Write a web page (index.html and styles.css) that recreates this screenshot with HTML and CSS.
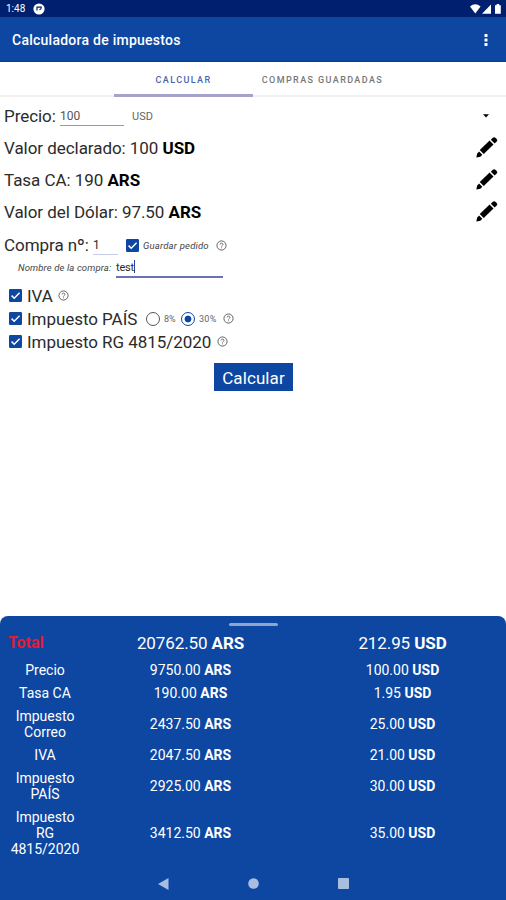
FILE: index.html
```html
<!DOCTYPE html>
<html lang="es">
<head>
    <meta charset="UTF-8">
    <meta name="viewport" content="width=device-width, initial-scale=1.0">
    <title>Calculadora de impuestos</title>
    <link rel="stylesheet" href="styles.css">
</head>
<body>
    <!-- Shared icons -->
    <svg class="sprite" width="0" height="0">
        <symbol id="pencil" viewBox="0 0 22 22">
            <path d="M3.8 14 13.6 4.6 17.5 8.6 7.7 18.1z"/>
            <path d="M14.9 3.7 16.8 1.8Q18.2.5 19.7 1.9L20.7 2.9Q22 4.4 20.7 5.6L18.6 7.4z"/>
            <path d="M3.1 15.6 6.3 18.8 4.4 20.8.3 21.4 1.2 17.4z"/>
        </symbol>
        <symbol id="help" viewBox="0 0 12 12">
            <circle cx="6" cy="6" r="5" fill="none" stroke="#555" stroke-width="1"/>
            <path d="M4.4 4.9Q4.4 3.4 6 3.4T7.6 4.8Q7.6 5.6 6.7 6 6 6.4 6 7.1M6 8.1V9" fill="none" stroke="#555" stroke-width=".9"/>
        </symbol>
        <symbol id="checked" viewBox="0 0 13 13">
            <rect width="13" height="13" rx="1.3" fill="#0d47a1"/>
            <path d="M2.6 6.6 5.2 9.2 10.6 3.8" fill="none" stroke="#fff" stroke-width="1.5"/>
        </symbol>
    </svg>

    <header class="status-bar">
        <span class="clock">1:48</span>
        <svg class="notice" width="12" height="12" viewBox="0 0 12 12">
            <circle cx="6" cy="6" r="5.6" fill="#fff"/>
            <path d="M4 7.6V4.2H8.2V5Q8 6.4 6.4 6.6" fill="none" stroke="#001f6e" stroke-width="1.2"/>
        </svg>
        <svg class="signals" width="32" height="10" viewBox="0 0 32 10">
            <path d="M0 2.4Q5.3-1.8 10.6 2.4L5.3 9.6z" fill="#fff"/>
            <path d="M12 9.7 21 .5V9.7z" fill="#fff"/>
            <path d="M25 1.2H26.6V0H29.2V1.2H30.8V9.7H25z" fill="#fff"/>
        </svg>
    </header>

    <div class="app-bar">
        <h1>Calculadora de impuestos</h1>
        <svg width="4" height="12" viewBox="0 0 4 12" fill="#fff">
            <rect x=".5" y="0" width="3" height="3" rx=".5"/>
            <rect x=".5" y="4.5" width="3" height="3" rx=".5"/>
            <rect x=".5" y="9" width="3" height="3" rx=".5"/>
        </svg>
    </div>

    <nav class="tabs">
        <div class="tab active"><span>CALCULAR</span></div>
        <div class="tab"><span>COMPRAS GUARDADAS</span></div>
    </nav>

    <main class="form">
        <div class="row">
            <span class="label price-label">Precio:</span>
            <span class="field price">100</span>
            <span class="currency">USD</span>
            <svg class="arrow" width="6" height="4" viewBox="0 0 6 4"><path d="M0 .3H6L3 3.6z"/></svg>
        </div>
        <div class="row">
            <span class="label">Valor declarado: 100 <b>USD</b></span>
            <svg class="pencil"><use href="#pencil"/></svg>
        </div>
        <div class="row">
            <span class="label">Tasa CA: 190 <b>ARS</b></span>
            <svg class="pencil"><use href="#pencil"/></svg>
        </div>
        <div class="row">
            <span class="label">Valor del Dólar: 97.50 <b>ARS</b></span>
            <svg class="pencil"><use href="#pencil"/></svg>
        </div>

        <div class="row order">
            <span class="label order-label">Compra nº:</span>
            <span class="field number">1</span>
            <svg class="check"><use href="#checked"/></svg>
            <span class="small save">Guardar pedido</span>
            <svg class="help"><use href="#help"/></svg>
        </div>
        <div class="row name">
            <span class="small name-label">Nombre de la compra:</span>
            <span class="field name-field">test<i class="caret"></i></span>
        </div>

        <div class="tax">
            <svg class="check"><use href="#checked"/></svg>
            <span class="label iva">IVA</span>
            <svg class="help"><use href="#help"/></svg>
        </div>
        <div class="tax">
            <svg class="check"><use href="#checked"/></svg>
            <span class="label pais">Impuesto PAÍS</span>
            <span class="radio"></span>
            <span class="percent">8%</span>
            <span class="radio on"></span>
            <span class="percent wide">30%</span>
            <svg class="help"><use href="#help"/></svg>
        </div>
        <div class="tax">
            <svg class="check"><use href="#checked"/></svg>
            <span class="label rg">Impuesto RG 4815/2020</span>
            <svg class="help"><use href="#help"/></svg>
        </div>

        <button class="calculate">Calcular</button>
    </main>

    <section class="sheet">
        <div class="handle"></div>
        <div class="results">
            <div class="line total"><span class="title">Total</span><span>20762.50 <b>ARS</b></span><span>212.95 <b>USD</b></span></div>
            <div class="line"><span>Precio</span><span>9750.00 <b>ARS</b></span><span>100.00 <b>USD</b></span></div>
            <div class="line"><span>Tasa CA</span><span>190.00 <b>ARS</b></span><span>1.95 <b>USD</b></span></div>
            <div class="line"><span>Impuesto<br>Correo</span><span>2437.50 <b>ARS</b></span><span>25.00 <b>USD</b></span></div>
            <div class="line"><span>IVA</span><span>2047.50 <b>ARS</b></span><span>21.00 <b>USD</b></span></div>
            <div class="line"><span>Impuesto<br>PAÍS</span><span>2925.00 <b>ARS</b></span><span>30.00 <b>USD</b></span></div>
            <div class="line"><span>Impuesto<br>RG<br>4815/2020</span><span>3412.50 <b>ARS</b></span><span>35.00 <b>USD</b></span></div>
        </div>
        <div class="nav-bar">
            <svg width="11" height="12" viewBox="0 0 11 12"><path d="M0 6 10.5 0V12z"/></svg>
            <svg width="11" height="11" viewBox="0 0 11 11"><circle cx="5.5" cy="5.5" r="5.3"/></svg>
            <svg width="11" height="11" viewBox="0 0 11 11"><rect width="11" height="11" rx=".8"/></svg>
        </div>
    </section>
</body>
</html>
```
FILE: styles.css
```css
* {
    box-sizing: border-box;
}
body {
    margin: 0;
    height: 900px;
    display: flex;
    flex-direction: column;
    overflow: hidden;
    background: #fff;
    color: #2b2b2b;
    font-family: Roboto, sans-serif;
}
svg {
    flex: none;
    display: block;
}
.sprite {
    position: absolute;
}
.status-bar {
    height: 17px;
    padding: 1px 4px 0 6px;
    display: flex;
    align-items: center;
    background: #001f6e;
    color: #fff;
}
.clock {
    width: 27px;
    font-size: 10px;
    line-height: 14px;
}
.signals {
    margin-left: auto;
}
.app-bar {
    height: 45px;
    padding: 2px 18px 0 12px;
    display: flex;
    align-items: center;
    justify-content: space-between;
    background: #0d47a1;
    border-bottom: 1px solid #0a3893;
}
.app-bar h1 {
    margin: 0;
    color: #fff;
    font-size: 14px;
    font-weight: 500;
    letter-spacing: 0.25px;
}
.tabs {
    height: 35px;
    display: flex;
    justify-content: center;
    border-bottom: 2px solid #f1f1f1;
}
.tab {
    width: 139px;
    height: 35px;
    padding-top: 12px;
    text-align: center;
    font-size: 9px;
    line-height: 12px;
    font-weight: 500;
    letter-spacing: 1.4px;
    color: #777;
    white-space: nowrap;
}
.tab.active {
    color: #4a63ad;
    border-bottom: 3px solid #a5a3cd;
}
.form {
    flex: 1;
    padding: 3px 8px 0 4px;
    display: flex;
    flex-direction: column;
}
.row {
    height: 32px;
    display: flex;
    align-items: center;
}
.label {
    font-size: 17px;
    line-height: 20px;
    letter-spacing: -0.05px;
    white-space: nowrap;
}
.label b {
    color: #000;
    font-weight: 700;
}
.price-label {
    width: 56px;
}
.field {
    height: 19px;
    border-bottom: 1px solid #7f9dd1;
    font-size: 12px;
    line-height: 19px;
}
.price {
    width: 64px;
    color: #555;
}
.currency {
    margin-left: 8px;
    color: #666;
    font-size: 11px;
}
.arrow {
    margin-left: auto;
    margin-right: 9px;
}
.pencil {
    width: 22px;
    height: 22px;
    margin: -2px 0 0 auto;
}
.order {
    height: 34px;
}
.order-label {
    width: 89px;
}
.number {
    width: 25px;
    border-color: #c4cce6;
}
.check {
    width: 13px;
    height: 13px;
}
.order .check {
    margin-left: 8px;
}
.small {
    color: #444;
    font-size: 9.5px;
    font-style: italic;
    white-space: nowrap;
}
.save {
    width: 73px;
    margin-left: 4px;
    letter-spacing: 0.2px;
}
.help {
    width: 11px;
    height: 11px;
}
.name {
    height: 16px;
    margin-top: -2px;
    padding-left: 14px;
}
.name-label {
    width: 98px;
    margin-top: -1px;
    letter-spacing: 0.12px;
}
.name-field {
    width: 107px;
    border-bottom: 2px solid #6a71b5;
    font-size: 11px;
    line-height: 18px;
    letter-spacing: -0.2px;
    display: flex;
}
.caret {
    width: 1.5px;
    height: 13px;
    margin-top: 1px;
    background: #333f9e;
}
.tax {
    height: 23px;
    padding-left: 5px;
    display: flex;
    align-items: center;
}
.name + .tax {
    margin-top: 8px;
}
.tax .label {
    margin-left: 5px;
}
.iva {
    width: 31px;
}
.pais {
    width: 119px;
}
.rg {
    width: 190px;
}
.radio {
    width: 14px;
    height: 14px;
    border: 1px solid #555;
    border-radius: 50%;
}
.radio.on {
    border: 1.5px solid #0d47a1;
    background: radial-gradient(#0d47a1 3px, #fff 3.8px);
}
.percent {
    width: 12px;
    margin: 0 5px 0 4px;
    color: #666;
    font-size: 9px;
}
.percent.wide {
    width: 19px;
    letter-spacing: 0.3px;
}
.calculate {
    width: 79px;
    height: 28px;
    margin: 10px 0 0 210px;
    padding: 1px 0 0;
    border: none;
    background: #0d47a1;
    color: #fff;
    font: 400 17px Roboto, sans-serif;
    letter-spacing: 0.1px;
}
.sheet {
    height: 284px;
    padding-top: 7px;
    display: flex;
    flex-direction: column;
    border-radius: 8px 8px 0 0;
    background: #0d47a1;
    color: #fff;
}
.handle {
    width: 49px;
    height: 3px;
    margin: 0 auto;
    border-radius: 2px;
    background: #8fa5cf;
}
.results {
    padding: 6px 0 0 8px;
    display: flex;
    flex-direction: column;
    gap: 7px;
}
.line {
    display: grid;
    grid-template-columns: 74px 217px 207px;
    align-items: center;
    text-align: center;
    font-size: 14px;
    line-height: 16px;
}
.total {
    margin-bottom: 1px;
    font-size: 17px;
    line-height: 22px;
    letter-spacing: -0.1px;
}
.total .title {
    color: #e01b33;
    font-size: 16px;
    font-weight: 700;
    text-align: left;
    letter-spacing: 0;
}
.nav-bar {
    height: 34px;
    margin-top: auto;
    padding-top: 1px;
    display: flex;
    align-items: center;
    justify-content: center;
    gap: 79px;
    fill: #a9bddf;
}
```
